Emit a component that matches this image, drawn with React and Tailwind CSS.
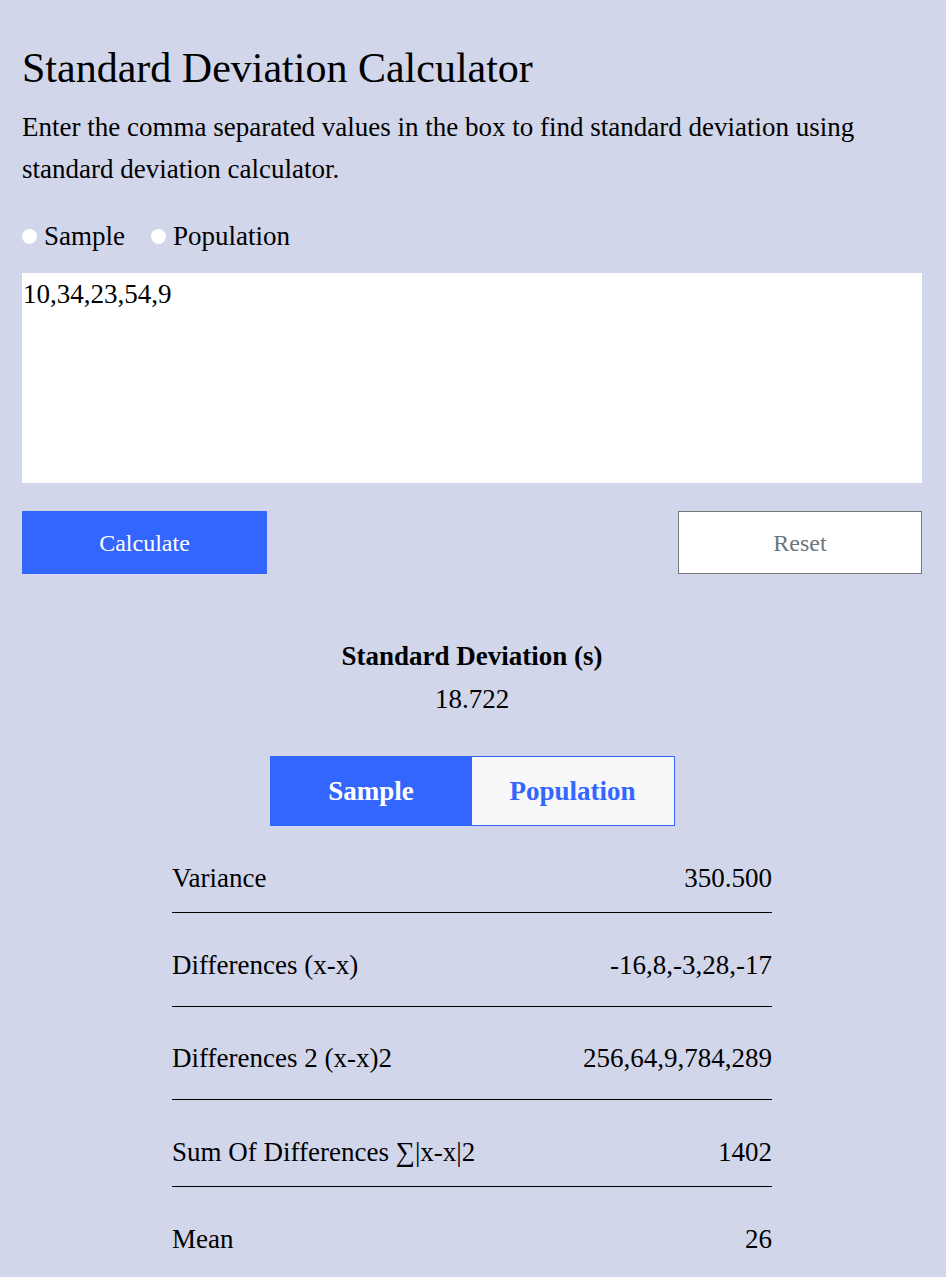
import { useState } from 'react';

const rows = [
  { label: 'Variance', value: '350.500', pad: 'pt-[34px] pb-[16px]', border: true },
  { label: 'Differences (x-x)', value: '-16,8,-3,28,-17', pad: 'pt-[34px] pb-[23px]', border: true },
  { label: 'Differences 2 (x-x)2', value: '256,64,9,784,289', pad: 'pt-[33px] pb-[23px]', border: true },
  { label: 'Sum Of Differences ∑|x-x|2', value: '1402', pad: 'pt-[34px] pb-[16px]', border: true },
  { label: 'Mean', value: '26', pad: 'pt-[34px] pb-[30px]', border: false },
];

const App = () => {
  const [mode, setMode] = useState('sample');
  const [values, setValues] = useState('10,34,23,54,9');

  return (
    <div className="min-h-screen bg-[#d2d6ea] text-black font-['Liberation_Serif','Times_New_Roman',serif]">
      <div className="pl-[22px] pr-[24px] pt-[43px]">
        {/* Header */}
        <h1 className="text-[42px] leading-[50px] font-normal">Standard Deviation Calculator</h1>
        <p className="mt-[13px] text-[27px] leading-[42px]">
          Enter the comma separated values in the box to find standard deviation using standard deviation calculator.
        </p>

        {/* Radio choices */}
        <div className="mt-[25px] flex items-start text-[27px] leading-[42px]">
          <label className="flex items-start">
            <input
              type="radio"
              name="type"
              className="appearance-none mt-[14px] w-[15px] h-[15px] rounded-full bg-white"
            />
            <span className="ml-[7px]">Sample</span>
          </label>
          <label className="flex items-start ml-[26px]">
            <input
              type="radio"
              name="type"
              className="appearance-none mt-[14px] w-[15px] h-[15px] rounded-full bg-white"
            />
            <span className="ml-[7px]">Population</span>
          </label>
        </div>

        {/* Input */}
        <textarea
          value={values}
          onChange={(e) => setValues(e.target.value)}
          className="mt-[16px] block w-full h-[210px] bg-white border-0 outline-none resize-none px-[1px] pt-[3px] text-[27px] leading-[36px]"
        />

        {/* Actions */}
        <div className="mt-[28px] flex justify-between">
          <button className="w-[245px] h-[63px] bg-[#3366ff] text-white text-[24px]">Calculate</button>
          <button className="w-[244px] h-[63px] bg-white border border-[#777] text-[#6c757d] text-[24px]">Reset</button>
        </div>

        {/* Result */}
        <div className="mt-[60px] text-center">
          <div className="text-[27px] leading-[44px] font-bold">Standard Deviation (s)</div>
          <div className="text-[27px] leading-[42px]">18.722</div>
        </div>

        <div className="mt-[36px] flex justify-center">
          <div className="flex w-[405px] h-[70px] border border-[#3366ff] text-[27px] font-bold">
            <button
              onClick={() => setMode('sample')}
              className={mode === 'sample' ? 'w-[201px] bg-[#3366ff] text-white' : 'w-[201px] bg-[#f8f8fa] text-[#3366ff]'}
            >
              Sample
            </button>
            <button
              onClick={() => setMode('population')}
              className={mode === 'population' ? 'flex-1 bg-[#3366ff] text-white' : 'flex-1 bg-[#f8f8fa] text-[#3366ff]'}
            >
              Population
            </button>
          </div>
        </div>

        {/* Details table */}
        <div className="w-[600px] mx-auto text-[27px] leading-[36px]">
          {rows.map((row) => (
            <div
              key={row.label}
              className={`flex justify-between ${row.pad} ${row.border ? 'border-b border-black' : ''}`}
            >
              <span>{row.label}</span>
              <span>{row.value}</span>
            </div>
          ))}
        </div>
      </div>
    </div>
  );
};

export default App;
